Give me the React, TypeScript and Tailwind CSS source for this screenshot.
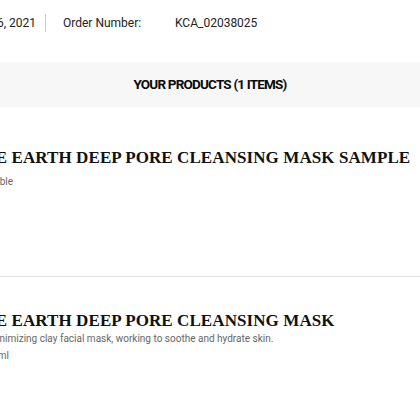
const SANS = "font-['Roboto','Liberation_Sans',sans-serif]";
const SERIF = "font-['Liberation_Serif','Times_New_Roman',serif]";

function LeftClip({ width, children, className }: { width: number; children: React.ReactNode; className?: string }) {
  // right-anchored box: text overflows off the left edge of the page
  return (
    <div className={"flex shrink-0 justify-end whitespace-nowrap " + (className ?? "")} style={{ width }}>
      {children}
    </div>
  );
}

type Line = { text: string; end?: number; shift?: string };
type Product = { name: string; gap: string; lines: Line[] };

const products: Product[] = [
  {
    name: "THE EARTH DEEP PORE CLEANSING MASK SAMPLE",
    gap: "mt-[6px]",
    lines: [{ text: "Non-refundable", end: 13 }],
  },
  {
    name: "THE EARTH DEEP PORE CLEANSING MASK",
    gap: "",
    lines: [
      { text: "Pore-minimizing clay facial mask, working to soothe and hydrate skin.", shift: "-ml-[35px]" },
      { text: "100ml", end: 9 },
    ],
  },
];

export default function App() {
  return (
    <div className={"h-[420px] w-[420px] overflow-hidden bg-white " + SANS}>
      {/* order meta */}
      <div className="flex h-[62px] items-start pt-[14px] text-[12px] text-[#222]">
        <LeftClip width={36} className="h-[18px] items-center">
          Order Date: Jan 26, 2021
        </LeftClip>
        <div className="ml-[9px] h-[18px] w-px bg-[#ccc]" />
        <div className="ml-[17px] flex h-[18px] items-center">
          <span className="w-[112px]">Order Number:</span>
          <span>KCA_02038025</span>
        </div>
      </div>

      {/* products header */}
      <div className="flex h-[45px] items-center justify-center bg-[#f7f7f7] text-[13.5px] font-bold tracking-[-0.06em] text-[#0a0a0a]">
        YOUR PRODUCTS (1 ITEMS)
      </div>

      {products.map((p, i) => (
        <div
          key={p.name}
          className={
            "flex flex-col " + (i === 0 ? "h-[170px] pt-[42px] border-b border-[#e2e2e2]" : "pt-[35px]")
          }
        >
          <div
            className={
              "-ml-[29px] whitespace-nowrap text-[17px] font-bold leading-[18px] tracking-[0.005em] text-[#111] " + SERIF
            }
          >
            {p.name}
          </div>
          <div className={"flex flex-col text-[10px] leading-[17px] text-[#666] " + p.gap}>
            {p.lines.map((l) =>
              l.end ? (
                <LeftClip key={l.text} width={l.end}>
                  {l.text}
                </LeftClip>
              ) : (
                <span key={l.text} className={"whitespace-nowrap " + (l.shift ?? "")}>
                  {l.text}
                </span>
              )
            )}
          </div>
        </div>
      ))}
    </div>
  );
}
